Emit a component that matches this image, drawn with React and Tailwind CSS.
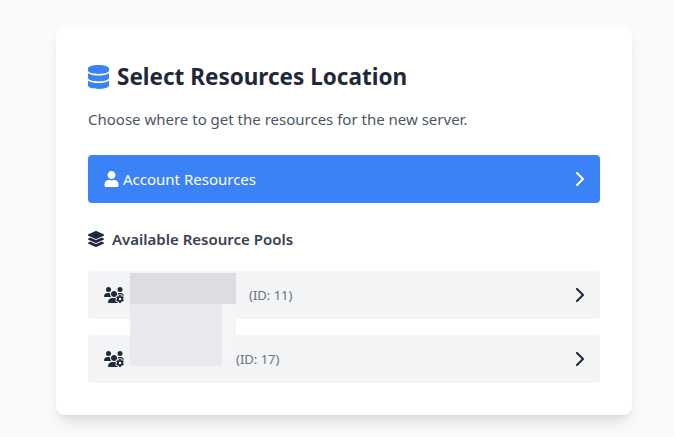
import React from "react";
import { FaDatabase, FaUser, FaLayerGroup } from "react-icons/fa";
import { FaChevronRight, FaUsersGear } from "react-icons/fa6";

const pools = [
  { id: 11, nameWidth: "w-[121px]" },
  { id: 17, nameWidth: "w-[108px]" },
];

const App = () => {
  return (
    <div className="min-h-screen bg-[#f9fafb] font-['Noto_Sans',sans-serif] px-14 pt-[27px]">
      <div className="relative w-[576px] h-[388px] rounded-lg bg-white p-8 shadow-lg">
        <h1 className="flex items-center h-9 text-[22.5px] font-bold text-[#1f2937]">
          <FaDatabase className="mr-2 w-[21px] h-6 text-[#3b82f6]" />
          Select Resources Location
        </h1>
        <p className="mt-3 h-6 text-[15px] leading-6 text-[#4b5563]">
          Choose where to get the resources for the new server.
        </p>
        <button
          type="button"
          className="mt-6 flex w-full h-12 items-center justify-between rounded bg-[#3b82f6] px-4 text-[15px] text-white"
        >
          <span className="flex items-center">
            <FaUser className="mr-1 w-[15px] h-4" />
            Account Resources
          </span>
          <FaChevronRight className="w-[10px] h-4" />
        </button>
        <h2 className="mt-6 flex items-center h-6 text-[15px] font-semibold text-[#374151]">
          <FaLayerGroup className="mr-2 w-4 h-4 text-[#1f2937]" />
          Available Resource Pools
        </h2>
        <div className="mt-5 flex flex-col gap-4">
          {pools.map((pool) => (
            <div
              key={pool.id}
              className="flex h-12 items-center justify-between rounded bg-[#f3f4f6] px-4"
            >
              <span className="flex items-center">
                <FaUsersGear className="w-5 h-4 text-[#1f2937]" />
                <span className={`block h-4 ${pool.nameWidth}`} />
                <span className="ml-1 pt-0.5 text-[13px] text-[#6b7280]">(ID: {pool.id})</span>
              </span>
              <FaChevronRight className="w-[10px] h-4 text-[#1f2937]" />
            </div>
          ))}
        </div>
        {/* blurred-out names lie over the rows */}
        <div className="absolute left-[74px] top-[246px] w-[106px]">
          <div className="h-[31px] bg-[#dcdde0]" />
          <div className="flex h-[62px]">
            <div className="w-[92px] bg-[#e9eaed]" />
            <div className="w-[14px] bg-[#f5f5f7]" />
          </div>
        </div>
      </div>
    </div>
  );
};

export default App;
